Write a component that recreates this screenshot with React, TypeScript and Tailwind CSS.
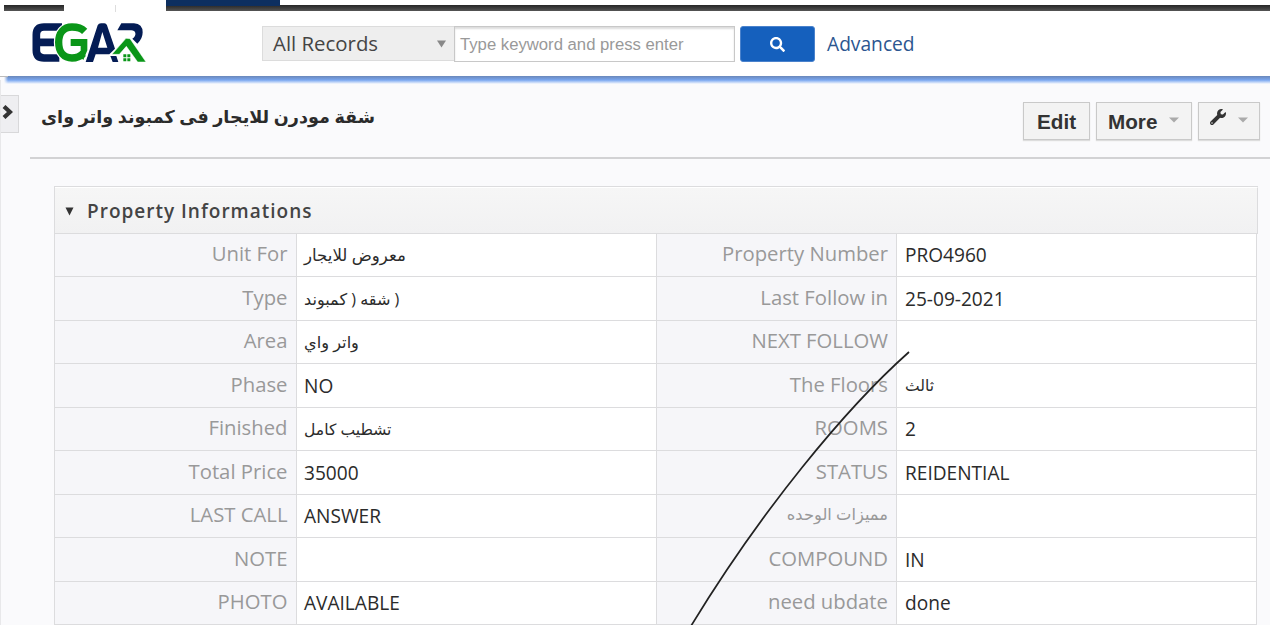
import React from "react";
import { FaSearch, FaWrench } from "react-icons/fa";

type Field = { label: string; value: React.ReactNode; labelAr?: boolean; ar?: string };

const left: Field[] = [
  { label: "Unit For", value: "معروض للايجار", ar: "text-[16.6px]" },
  {
    label: "Type",
    value: (
      <>
        <bdi dir="rtl">شقه ( كمبوند</bdi> )
      </>
    ),
    ar: "text-[16.1px]",
  },
  { label: "Area", value: "واتر واي", ar: "text-[16.2px]" },
  { label: "Phase", value: "NO" },
  { label: "Finished", value: "تشطيب كامل", ar: "text-[15.6px]" },
  { label: "Total Price", value: "35000" },
  { label: "LAST CALL", value: "ANSWER" },
  { label: "NOTE", value: "" },
  { label: "PHOTO", value: "AVAILABLE" },
];

const right: Field[] = [
  { label: "Property Number", value: "PRO4960" },
  { label: "Last Follow in", value: "25-09-2021" },
  { label: "NEXT FOLLOW", value: "" },
  { label: "The Floors", value: "ثالث", ar: "text-[15.5px]" },
  { label: "ROOMS", value: "2" },
  { label: "STATUS", value: "REIDENTIAL" },
  { label: "مميزات الوحده", value: "", labelAr: true },
  { label: "COMPOUND", value: "IN" },
  { label: "need ubdate", value: "done" },
];

function Cell({ f, first }: { f: Field; first?: boolean }) {
  return (
    <>
      <div
        className={`flex items-center justify-end border-r border-b border-[#dcdcde] bg-[#f6f6f9] pb-[3px] whitespace-nowrap text-[#999] ${first ? "pr-[8.5px]" : "pr-[8px]"}`}
      >
        <span className={f.labelAr ? "text-[16.3px]" : "text-[20.3px]"}>{f.label}</span>
      </div>
      <div
        className={`flex items-center border-r border-b border-[#dcdcde] bg-white pt-px whitespace-nowrap text-[#2b2b2b] ${first ? "pl-[7px]" : "pl-[8px]"}`}
      >
        <span className={f.ar ?? "text-[19.1px]"}>{f.value}</span>
      </div>
    </>
  );
}

function Logo() {
  return (
    <svg width="116" height="42" viewBox="90 63 348 126" fill="none" className="block">
      <g stroke="#041c55" strokeWidth="23">
        <path d="M186 81H132Q109 81 109 104V151Q109 174 132 174H178M112 127H165" />
      </g>
      <path d="M257 186L293 76Q296 70 303 70H313Q319 70 321 76L345 146L328 163H287L279 186ZM307 96L294 143H322Z" fill="#041c55" fillRule="evenodd" />
      <path d="M331 168H349L355 186H338Z" fill="#041c55" />
      <path d="M364 70H402Q428 72 428 97Q428 117 412 131L397 116Q408 109 406 99Q404 91 394 91H352Z" fill="#041c55" />
      <path
        d="M253 94C243 84 230 81 216 81C191 81 176 99 176 127C176 157 192 174 216 174C232 174 243 168 253 158"
        stroke="#fff"
        strokeWidth="29"
      />
      <path
        d="M254 94C244 84 230 81 216 81C191 81 176 99 176 127C176 157 192 174 216 174C230 174 241 169 250 160"
        stroke="#0a9618"
        strokeWidth="22"
      />
      <path d="M212 117H262V151L250 180L234 164L242 153V138H212Z" fill="#0a9618" />
      <path d="M336 163L378 115L390 116L438 186H413L379 139L358 163Z" fill="#0a9618" stroke="#fff" strokeWidth="1.500" />
      <path d="M370 163h9v9h-9zM382 163h9v9h-9zM370 175h9v9h-9zM382 175h9v9h-9z" fill="#0a9618" />
    </svg>
  );
}

export default function App() {
  return (
    <div className="relative h-[625px] w-[1270px] overflow-hidden bg-[#fafafc] font-['Open_Sans','DejaVu_Sans',sans-serif]">
      <div className="flex h-[12px] bg-white">
        <div className="mt-[5px] ml-[4px] h-[6px] w-[60px] bg-linear-to-b from-[#262626] to-[#555]" />
        <div className="mt-[5px] h-[7px] w-[52px] border-r border-[#ddd]" />
        <div className="w-[50px]" />
        <div className="flex flex-1 flex-col">
          <div className="z-10 h-[6px] w-[114px] bg-[#0d2f60]" />
          <div className="-mt-px h-[6px] bg-linear-to-b from-[#262626] to-[#555]" />
        </div>
      </div>

      <header className="flex h-[64px] items-start bg-white">
        <div className="ml-[30px] w-[232px] pt-[9px]">
          <Logo />
        </div>
        <div className="mt-[14px] flex h-[35px] w-[192px] items-center justify-between border border-r-0 border-[#dcdcdc] bg-[#eee] pr-[8px] pl-[10px] text-[20.4px] text-[#444]">
          <span>All Records</span>
          <svg width="9" height="8">
            <path d="M0 0.500H9L4.500 7.500Z" fill="#888" />
          </svg>
        </div>
        <div className="mt-[14px] flex h-[36px] w-[281px] items-center border border-[#c8c8c8] bg-white pt-px pl-[5px] font-['Liberation_Sans',sans-serif] text-[16.7px] text-[#999] shadow-[inset_0_2px_2px_#ddd]">
          <span>Type keyword and press enter</span>
        </div>
        <div className="mt-[14px] ml-[5px] flex h-[36px] w-[75px] items-center justify-center rounded-[3px] border border-[#4a82cc] bg-[#1560bd] text-white">
          <FaSearch size={15} />
        </div>
        <div className="mt-[17px] ml-[12px] text-[19.2px] leading-[29px] text-[#2b5690]">Advanced</div>
      </header>
      <div className="flex h-[8px] bg-linear-to-b from-[#6a88ba] via-[#79a6ef] to-[#fafafc]">
        <div className="h-[8px] w-[8px] border-t border-[#bbb] bg-linear-to-r from-[#fafafc] from-50% to-transparent" />
      </div>

      <div className="flex h-[74px] items-start">
        <div className="mt-[11px] flex h-[38px] w-[19px] items-center border border-l-0 border-[#d8d8da] bg-[#eeeef1] pb-[4px] pl-[2px]">
          <svg width="11" height="14" viewBox="0 0 11 14">
            <path d="M2 1.500L8 7L2 12.500" stroke="#333" strokeWidth="4.200" fill="none" />
          </svg>
        </div>
        <div className="ml-[11px] flex h-[75px] flex-1 items-start border-b-2 border-[#d2d2d4]">
          <h1 className="mt-[18px] ml-[11px] w-[982px] text-[17.600px] leading-[28px] font-bold whitespace-nowrap text-[#2b2b2b]">
            شقة مودرن للايجار فى كمبوند واتر واى
          </h1>
          <div className="mt-[18px] flex gap-[6px] font-['Liberation_Sans',sans-serif] text-[20.7px] font-bold text-[#333]">
            <div className="flex h-[38px] w-[67px] items-center justify-center border border-[#c9c9c9] bg-[#f3f3f3] pt-px shadow-[0_1px_1px_#ddd]">
              Edit
            </div>
            <div className="flex h-[38px] w-[96px] items-center border border-[#c9c9c9] bg-[#f3f3f3] pt-px pl-[11px] shadow-[0_1px_1px_#ddd]">
              <span>More</span>
              <svg width="10" height="6" className="mb-[4px] ml-[12px]">
                <path d="M0 0.500H10L5 5.500Z" fill="#aaa" />
              </svg>
            </div>
            <div className="flex h-[38px] w-[62px] items-center border border-[#c9c9c9] bg-[#f3f3f3] pt-px pl-[11px] shadow-[0_1px_1px_#ddd]">
              <FaWrench size={16} className="mb-[9px]" />
              <svg width="10" height="6" className="mb-[4px] ml-[12px]">
                <path d="M0 0.500H10L5 5.500Z" fill="#aaa" />
              </svg>
            </div>
          </div>
        </div>
      </div>

      <section className="mt-[28px] ml-[54px] w-[1204px] border-t border-l border-[#dcdcde]">
        <div className="flex h-[46.75px] items-center border-t border-r border-b border-[#dcdcde] border-t-white bg-linear-to-b from-[#f6f6f6] to-[#f1f1f2] pt-[2px] pl-[10px]">
          <svg width="9" height="9">
            <path d="M0.500 0.500H8.500L4.500 8.500Z" fill="#333" />
          </svg>
          <h2 className="ml-[13px] text-[19px] font-semibold tracking-[1px] text-[#444]">Property Informations</h2>
        </div>
        <div className="grid auto-rows-[43.5px] grid-cols-[242px_360px_240px_360px]">
          {left.map((f, i) => (
            <React.Fragment key={f.label}>
              <Cell f={f} first />
              <Cell f={right[i]} />
            </React.Fragment>
          ))}
        </div>
      </section>

      <svg className="pointer-events-none absolute top-0 left-0" width="1270" height="625" fill="none">
        <path d="M909 352C845 409 761 511 691 626" stroke="#222" strokeWidth="1.700" />
        <path d="M0.500 80V625" stroke="#e8e8ea" />
      </svg>
    </div>
  );
}
